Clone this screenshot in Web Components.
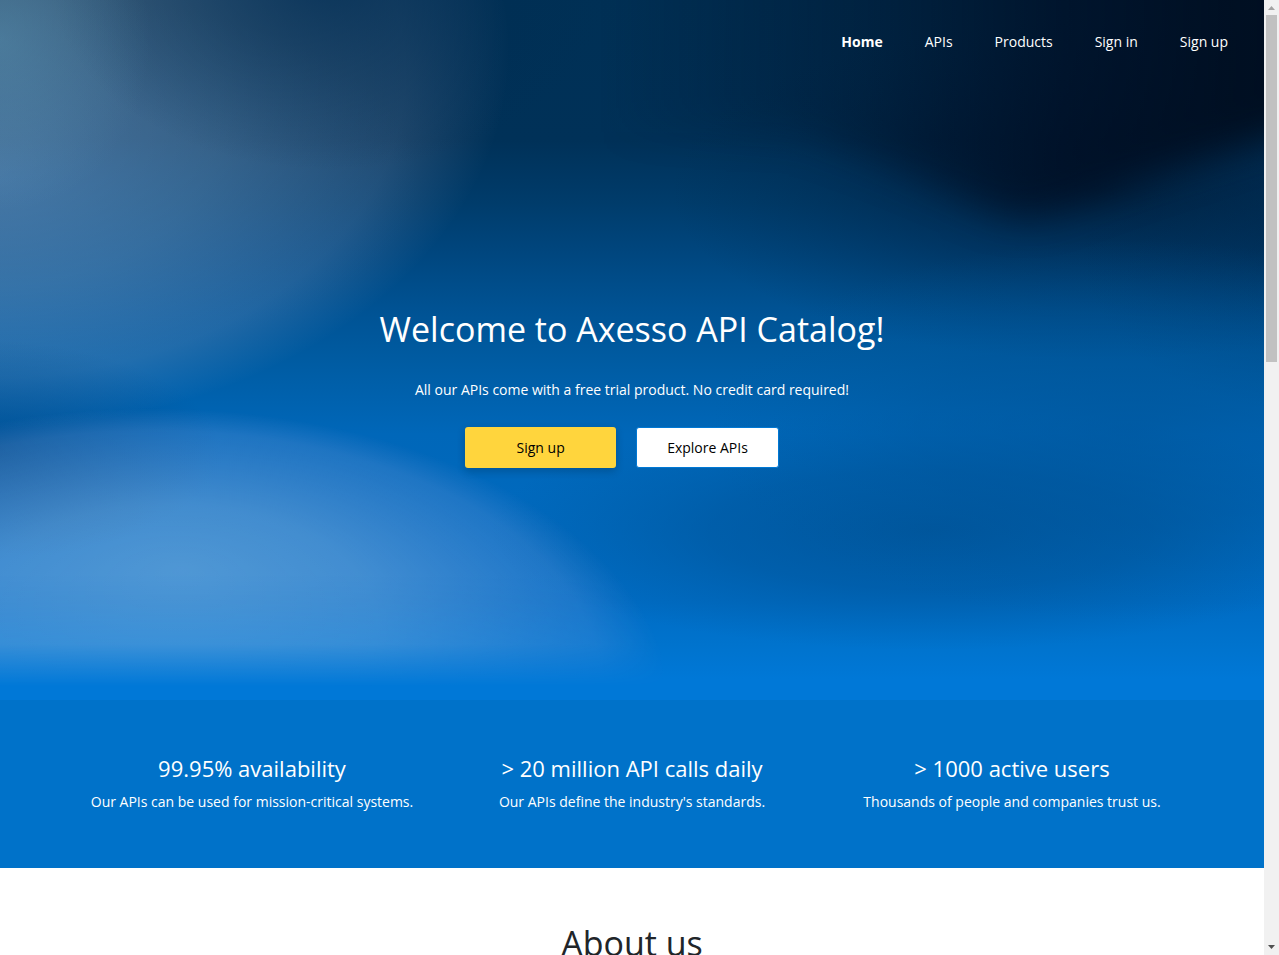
<!DOCTYPE html>
<html lang="en">
<head>
<meta charset="utf-8">
<meta name="viewport" content="width=device-width, initial-scale=1">
<title>Axesso API Catalog</title>
<style>
  html, body { height: 100%; margin: 0; }
  body { font: 14px/20px "Open Sans", "Noto Sans", sans-serif; color: #212529; background: #fff; overflow: hidden; }
</style>
</head>
<body>
<catalog-page></catalog-page>

<script>
const define = (name, markup) => customElements.define(name, class extends HTMLElement {
  constructor() {
    super();
    const template = document.createElement('template');
    template.innerHTML = markup;
    this.attachShadow({ mode: 'open' }).append(template.content.cloneNode(true));
  }
});

/* Soft blue aurora that stretches with the hero */
define('hero-backdrop', `
  <style>
    :host { display: block; }
    svg { display: block; width: 100%; height: 100%; }
  </style>
  <svg viewBox="0 0 1264 700" preserveAspectRatio="none" aria-hidden="true">
    <defs>
      <linearGradient id="base" gradientUnits="userSpaceOnUse" x1="0" y1="0" x2="0" y2="700">
        <stop offset="0" stop-color="#003055"/>
        <stop offset=".2" stop-color="#003158"/>
        <stop offset=".29" stop-color="#003c6b"/>
        <stop offset=".36" stop-color="#00467e"/>
        <stop offset=".44" stop-color="#005293"/>
        <stop offset=".52" stop-color="#005ca3"/>
        <stop offset=".62" stop-color="#0067b9"/>
        <stop offset=".86" stop-color="#006cc4"/>
        <stop offset=".92" stop-color="#0073cd"/>
        <stop offset=".97" stop-color="#0078d7"/>
        <stop offset="1" stop-color="#0078d7"/>
      </linearGradient>
      <linearGradient id="night" gradientUnits="userSpaceOnUse" x1="600" y1="0" x2="1264" y2="0">
        <stop offset="0" stop-color="#000a1c" stop-opacity="0"/>
        <stop offset=".4" stop-color="#000a1c" stop-opacity=".35"/>
        <stop offset=".7" stop-color="#000c20" stop-opacity=".75"/>
        <stop offset="1" stop-color="#000e20" stop-opacity=".97"/>
      </linearGradient>
      <radialGradient id="dusk">
        <stop offset="0" stop-color="#001228" stop-opacity=".62"/>
        <stop offset=".5" stop-color="#001c3a" stop-opacity=".35"/>
        <stop offset="1" stop-color="#00284a" stop-opacity="0"/>
      </radialGradient>
      <radialGradient id="pool">
        <stop offset="0" stop-color="#005092" stop-opacity=".85"/>
        <stop offset=".5" stop-color="#005295" stop-opacity=".55"/>
        <stop offset="1" stop-color="#005aa0" stop-opacity="0"/>
      </radialGradient>
      <radialGradient id="lift">
        <stop offset="0" stop-color="#005fb0" stop-opacity=".4"/>
        <stop offset="1" stop-color="#005fb0" stop-opacity="0"/>
      </radialGradient>
      <radialGradient id="mist" fx=".5" fy=".66">
        <stop offset="0" stop-color="#fff4ff" stop-opacity=".28"/>
        <stop offset=".45" stop-color="#fff4ff" stop-opacity=".21"/>
        <stop offset=".8" stop-color="#ffe8ff" stop-opacity=".13"/>
        <stop offset="1" stop-color="#ffe0ff" stop-opacity="0"/>
      </radialGradient>
      <radialGradient id="glow" cx=".5" cy=".5" r=".5" fx=".53" fy=".27">
        <stop offset="0" stop-color="#fffaff" stop-opacity=".31"/>
        <stop offset=".4" stop-color="#fff2ff" stop-opacity=".26"/>
        <stop offset=".86" stop-color="#ffd8ff" stop-opacity=".12"/>
        <stop offset="1" stop-color="#ffd0ff" stop-opacity="0"/>
      </radialGradient>
      <linearGradient id="fade" gradientUnits="userSpaceOnUse" x1="0" y1="0" x2="0" y2="700">
        <stop offset=".82" stop-color="#fff"/>
        <stop offset=".92" stop-color="#ccc"/>
        <stop offset=".98" stop-color="#000"/>
      </linearGradient>
      <radialGradient id="shade">
        <stop offset="0" stop-color="#003c72" stop-opacity=".5"/>
        <stop offset="1" stop-color="#003c72" stop-opacity="0"/>
      </radialGradient>
      <radialGradient id="dim">
        <stop offset="0" stop-color="#002c52" stop-opacity=".7"/>
        <stop offset="1" stop-color="#002c52" stop-opacity="0"/>
      </radialGradient>
      <radialGradient id="corner">
        <stop offset="0" stop-color="#5b96b4" stop-opacity=".45"/>
        <stop offset="1" stop-color="#5b96b4" stop-opacity="0"/>
      </radialGradient>
      <mask id="horizon" maskUnits="userSpaceOnUse" x="0" y="0" width="1264" height="700">
        <rect width="1264" height="700" fill="url(#fade)"/>
      </mask>
      <filter id="soft" filterUnits="userSpaceOnUse" x="400" y="-200" width="1100" height="800" color-interpolation-filters="sRGB">
        <feGaussianBlur stdDeviation="18"/>
      </filter>
      <mask id="valley" maskUnits="userSpaceOnUse" x="0" y="0" width="1264" height="700">
        <path d="M500-90H1400V90L1264 140 1140 180 1040 216 1000 214 900 172 800 135 500 130Z" fill="#fff" filter="url(#soft)"/>
      </mask>
    </defs>
    <rect width="1264" height="700" fill="url(#base)"/>
    <ellipse cx="0" cy="180" rx="420" ry="190" fill="url(#lift)"/>
    <ellipse cx="1100" cy="190" rx="430" ry="170" fill="url(#dusk)"/>
    <ellipse cx="1300" cy="250" rx="220" ry="160" fill="url(#dusk)" opacity=".4"/>
    <ellipse cx="930" cy="530" rx="440" ry="120" fill="url(#pool)" opacity=".9"/>
    <ellipse cx="1130" cy="430" rx="420" ry="190" fill="url(#pool)" opacity=".6"/>
    <rect x="600" width="664" height="400" fill="url(#night)" mask="url(#valley)"/>
    <ellipse cx="-15" cy="50" rx="525" ry="380" fill="url(#mist)"/>
    <ellipse cx="330" cy="-20" rx="280" ry="190" fill="url(#dim)"/>
    <ellipse cx="0" cy="40" rx="150" ry="170" fill="url(#corner)"/>
    <ellipse cx="-20" cy="450" rx="240" ry="110" fill="url(#shade)"/>
    <ellipse cx="150" cy="706" rx="520" ry="298" fill="url(#glow)" mask="url(#horizon)"/>
  </svg>
`);

define('nav-link', `
  <style>
    :host { display: block; }
    a { color: #fff; text-decoration: none; }
    :host([current]) a { font-weight: 700; }
  </style>
  <a href="#"><slot></slot></a>
`);

define('site-nav', `
  <style>
    :host { display: block; }
    nav { display: flex; flex-wrap: wrap; justify-content: flex-end; gap: 42px; padding: 32px 36px; }
  </style>
  <nav aria-label="Main"><slot></slot></nav>
`);

define('action-button', `
  <style>
    :host { display: block; }
    button {
      box-sizing: border-box; height: 41px; padding: 0 30px; border: 1px solid #0078d4; border-radius: 3px;
      background: #fff; color: #000; font: inherit; cursor: pointer;
    }
    :host([primary]) button {
      min-width: 151px; border: 0; background: #ffd53d;
      box-shadow: 0 3px 8px rgba(0, 0, 0, .2);
    }
  </style>
  <button type="button"><slot></slot></button>
`);

define('hero-banner', `
  <style>
    :host { display: grid; min-height: 700px; color: #fff; }
    hero-backdrop, .content { grid-area: 1 / 1; min-width: 0; }
    .content { display: flex; flex-direction: column; z-index: 1; }
    .welcome { display: flex; flex-direction: column; align-items: center; padding-top: 220px; text-align: center; }
    h1 { margin: 0; font-size: 34px; line-height: 50px; font-weight: 400; }
    p { margin: 26px 0 27px; }
    .actions { display: flex; flex-wrap: wrap; gap: 20px; margin-right: 20px; }
    hero-backdrop { contain: size; }
  </style>
  <hero-backdrop></hero-backdrop>
  <div class="content">
    <site-nav>
      <nav-link current>Home</nav-link>
      <nav-link>APIs</nav-link>
      <nav-link>Products</nav-link>
      <nav-link>Sign in</nav-link>
      <nav-link>Sign up</nav-link>
    </site-nav>
    <div class="welcome">
      <h1>Welcome to Axesso API Catalog!</h1>
      <p>All our APIs come with a free trial product. No credit card required!</p>
      <div class="actions">
        <action-button primary>Sign up</action-button>
        <action-button>Explore APIs</action-button>
      </div>
    </div>
  </div>
`);

define('stat-card', `
  <style>
    :host { display: block; text-align: center; }
    h2 { margin: 0 0 9px; font-size: 22px; line-height: 30px; font-weight: 400; }
    p { margin: 0; }
  </style>
  <h2><slot name="title"></slot></h2>
  <p><slot></slot></p>
`);

define('stats-band', `
  <style>
    :host { display: block; background: #0072c9; color: #fff; padding: 53px 0 56px; }
    .row { display: grid; grid-template-columns: repeat(3, 1fr); max-width: 1140px; margin: 0 auto; }
  </style>
  <div class="row">
    <stat-card><span slot="title">99.95% availability</span>Our APIs can be used for mission-critical systems.</stat-card>
    <stat-card><span slot="title">&gt; 20 million API calls daily</span>Our APIs define the industry's standards.</stat-card>
    <stat-card><span slot="title">&gt; 1000 active users</span>Thousands of people and companies trust us.</stat-card>
  </div>
`);

define('about-section', `
  <style>
    :host { display: block; padding: 50px 0; text-align: center; }
    h2 { margin: 0; font-size: 34px; line-height: 50px; font-weight: 400; }
  </style>
  <h2>About us</h2>
`);

define('scroll-rail', `
  <style>
    :host { display: grid; grid-template-rows: 15px 1fr 15px; background: #f1f1f1; }
    svg { display: block; width: 15px; height: 15px; }
    .track { display: grid; grid-template-rows: 3fr 5fr; padding: 0 2px; }
    .thumb { background: #c1c1c1; }
  </style>
  <svg viewBox="0 0 15 15" aria-hidden="true"><path d="M4 10h7L7.500 6Z" fill="#a3a3a3"/></svg>
  <div class="track"><div class="thumb"></div></div>
  <svg viewBox="0 0 15 15" aria-hidden="true"><path d="M4 5h7L7.500 9Z" fill="#505050"/></svg>
`);

define('catalog-page', `
  <style>
    :host { display: grid; grid-template-columns: 1fr 15px; height: 100vh; }
    main { min-width: 0; overflow: hidden; }
  </style>
  <main>
    <hero-banner></hero-banner>
    <stats-band></stats-band>
    <about-section></about-section>
  </main>
  <scroll-rail></scroll-rail>
`);
</script>
</body>
</html>
